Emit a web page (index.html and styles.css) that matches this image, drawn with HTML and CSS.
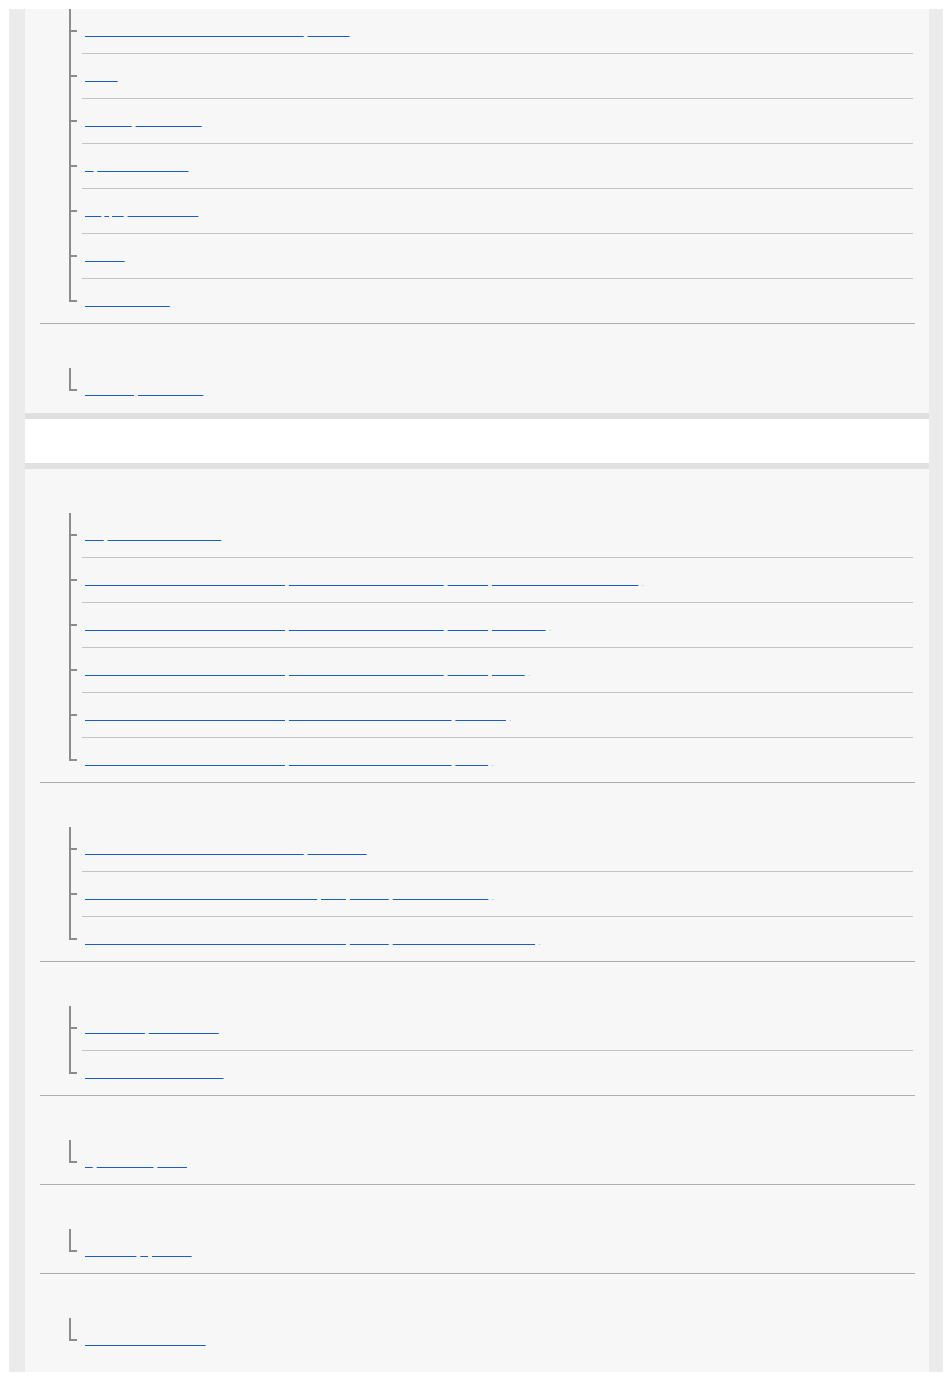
FILE: index.html
```html
<!DOCTYPE html>
<html lang="en">
<head>
<meta charset="utf-8">
<title>Help Guide - Contents</title>
<link rel="stylesheet" href="styles.css">
</head>
<body>
<div class="page">
  <div class="panel">
    <section class="group first">
      <ul class="tree">
        <li><a href="#"><span class="u">Recording Level Display with Audio</span> <span class="u">Output</span></a></li>
        <li><a href="#"><span class="u">Beep</span></a></li>
        <li><a href="#"><span class="u">Monitor</span> <span class="u">Brightness</span></a></li>
        <li><a href="#"><span class="u">A</span> <span class="u">Time Zone Set</span></a></li>
        <li><a href="#"><span class="u">Wi</span><span class="u gap">-</span><span class="u gap">Fi</span> <span class="u">Connection</span></a></li>
        <li><a href="#"><span class="u">Power</span></a></li>
        <li><a href="#"><span class="u">Notes on Use</span></a></li>
      </ul>
    </section>
    <section class="group">
      <h3 class="group-title">Remote control</h3>
      <ul class="tree">
        <li><a href="#"><span class="u">Remote</span> <span class="u">Monitoring</span></a></li>
      </ul>
    </section>
  </div>

  <div class="category"><h2 class="category-title">Using the camera with other devices</h2></div>

  <div class="panel last">
    <section class="group">
      <h3 class="group-title">Picture profile</h3>
      <ul class="tree">
        <li><a href="#"><span class="u">My</span> <span class="u">Menu Registration</span></a></li>
        <li><a href="#"><span class="u">Shooting Settings for Movie with</span> <span class="u">Picture Profile Saturation</span> <span class="u">Levels</span> <span class="u">for Color Phase Control</span> <span class="tail">.</span></a></li>
        <li><a href="#"><span class="u">Shooting Settings for Movie with</span> <span class="u">Picture Profile Saturation</span> <span class="u">Levels</span> <span class="u">for Color</span> <span class="tail">.</span></a></li>
        <li><a href="#"><span class="u">Shooting Settings for Movie with</span> <span class="u">Picture Profile Saturation</span> <span class="u">Levels</span> <span class="u">Knee</span> <span class="tail">.</span></a></li>
        <li><a href="#"><span class="u">Shooting Settings for Movie with</span> <span class="u">Picture Profile Black Level</span> <span class="u">Balance</span> <span class="tail">.</span></a></li>
        <li><a href="#"><span class="u">Shooting Settings for Movie with</span> <span class="u">Picture Profile Black Level</span> <span class="u">Knee</span> <span class="tail">.</span></a></li>
      </ul>
    </section>
    <section class="group">
      <h3 class="group-title">Transferring images</h3>
      <ul class="tree">
        <li><a href="#"><span class="u">Recording Level Display with Audio</span> <span class="u">Channels</span></a></li>
        <li><a href="#"><span class="u">Transferring Images to a Smartphone</span> <span class="u">with</span> <span class="u">Image</span> <span class="u">Size Selections</span> <span class="tail">.</span></a></li>
        <li><a href="#"><span class="u">Transferring Images to a Smartphone with</span> <span class="u">Image</span> <span class="u">Orientation Information</span> <span class="tail">.</span></a></li>
      </ul>
    </section>
    <section class="group">
      <h3 class="group-title">Information</h3>
      <ul class="tree">
        <li><a href="#"><span class="u">Copyright</span> <span class="u">Information</span></a></li>
        <li><a href="#"><span class="u">Setting Date and Time</span></a></li>
      </ul>
    </section>
    <section class="group">
      <h3 class="group-title">Battery</h3>
      <ul class="tree">
        <li><a href="#"><span class="u">If</span> <span class="u">Charging</span> <span class="u">Fails</span></a></li>
      </ul>
    </section>
    <section class="group">
      <h3 class="group-title">Deleting</h3>
      <ul class="tree">
        <li><a href="#"><span class="u">Deleting</span> <span class="u">a</span> <span class="u">Profile</span></a></li>
      </ul>
    </section>
    <section class="group end">
      <h3 class="group-title">Specifications</h3>
      <ul class="tree">
        <li><a href="#"><span class="u">Version Information</span></a></li>
      </ul>
    </section>
  </div>
</div>
</body>
</html>
```
FILE: styles.css
```css
html {
  background: #ffffff;
}

body {
  margin: 0;
  font-family: "Liberation Sans", Arial, sans-serif;
  font-size: 14px;
  color: #333333;
}

.page {
  margin: 9px 7px 0 9px;
  padding: 0 14px 0 16px;
  background: #ebebeb;
}

.panel {
  background: #f7f7f7;
  padding-bottom: 1px;
}

.panel.last {
  padding-bottom: 10px;
}

.category {
  background: #ffffff;
  border-top: 6px solid #dfdfdf;
  border-bottom: 6px solid #e1e1e1;
  height: 44px;
}

.category-title {
  margin: 0;
  padding-left: 30px;
  font-size: 16px;
  font-weight: bold;
  line-height: 44px;
  color: transparent;
}

.group {
  margin: 0 14px 0 15px;
  border-bottom: 1px solid #adadad;
}

.panel > .group:last-child {
  border-bottom: none;
}

.group-title {
  margin: 0;
  height: 44px;
  padding-left: 30px;
  font-size: 14px;
  font-weight: bold;
  line-height: 44px;
  color: transparent;
}

.tree {
  list-style: none;
  margin: 0;
  padding: 0 2px 0 42px;
}

.tree li {
  position: relative;
  height: 44px;
  box-sizing: content-box;
  border-bottom: 1px solid #c4c4c4;
}

.tree li:last-child {
  border-bottom: none;
}

.tree li::before {
  content: "";
  position: absolute;
  left: -13px;
  top: 0;
  bottom: -1px;
  width: 2px;
  background: #8c8c8c;
}

.tree li:last-child::before {
  bottom: auto;
  height: 23px;
}

.tree li::after {
  content: "";
  position: absolute;
  left: -13px;
  top: 21px;
  width: 8px;
  height: 2px;
  background: #8c8c8c;
}

.tree a {
  display: block;
  padding: 11px 0 0 3px;
  line-height: 20px;
  color: transparent;
  text-decoration: none;
  white-space: nowrap;
}

.u {
  text-decoration: underline;
  text-decoration-color: #1a5cc4;
  text-decoration-thickness: 1px;
  text-decoration-skip-ink: none;
}

.gap {
  margin-left: 3px;
}

.tail {
  font-size: 4px;
  text-decoration: underline;
  text-decoration-color: #a9c3e8;
  text-decoration-thickness: 1px;
  text-decoration-skip-ink: none;
}
```
